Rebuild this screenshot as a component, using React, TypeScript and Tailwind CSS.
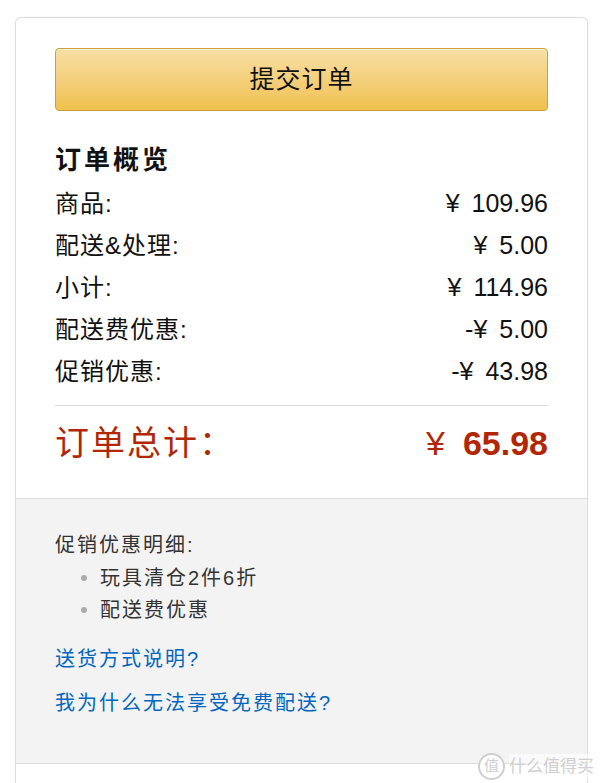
import React from 'react';

const font = "font-['Liberation_Sans','Noto_Sans_CJK_SC',sans-serif]";

const App: React.FC = () => {
  const rows = [
    { label: '商品:', sign: '', amount: '109.96' },
    { label: '配送&处理:', sign: '', amount: '5.00' },
    { label: '小计:', sign: '', amount: '114.96' },
    { label: '配送费优惠:', sign: '-', amount: '5.00' },
    { label: '促销优惠:', sign: '-', amount: '43.98' },
  ];

  return (
    <div className={`relative bg-white min-h-[783px] pt-[17px] ${font} text-[#111]`}>
      <div className="ml-[15px] w-[573px] border border-b-0 border-[#ddd] rounded-t-[6px] shadow-[0_0_2px_rgba(0,0,0,0.06)]">
        {/* summary */}
        <div className="px-[39px] pt-[30px] pb-[18px]">
          <button className="w-full h-[63px] rounded-[4px] border border-[#c9a23e] bg-gradient-to-b from-[#f7dfa5] to-[#f0c14b] shadow-[inset_0_1px_0_rgba(255,255,255,0.5)] text-[25px] tracking-[1px] text-[#111]">
            提交订单
          </button>

          <h2 className="mt-[31px] h-[36px] leading-[36px] text-[26px] tracking-[3px] font-bold">订单概览</h2>

          <div className="mt-[5px]">
            {rows.map((row) => (
              <div key={row.label} className="h-[42px] flex items-center justify-between">
                <span className="text-[24px] tracking-[1px]">{row.label}</span>
                <span className="text-[25px]">
                  {row.sign}
                  <span className="mr-[12px]">¥</span>
                  {row.amount}
                </span>
              </div>
            ))}
          </div>

          <div className="mt-[12px] border-t border-[#ddd]" />

          <div className="h-[74px] flex items-center justify-between text-[#b12704]">
            <span className="text-[34px] tracking-[2px]">订单总计：</span>
            <span className="text-[34px]">
              <span className="mr-[18px]">¥</span>
              <span className="font-bold">65.98</span>
            </span>
          </div>
        </div>

        {/* promo details */}
        <div className="bg-[#f3f3f3] border-t border-b border-[#ddd] px-[39px] pt-[31px] pb-[45px] text-[20px] tracking-[2px]">
          <div className="h-[30px] leading-[30px] text-[#333]">促销优惠明细:</div>
          <ul className="mt-[2px]">
            {['玩具清仓2件6折', '配送费优惠'].map((item) => (
              <li key={item} className="h-[32px] flex items-center text-[#333]">
                <span className="ml-[26px] mr-[13px] w-[6px] h-[6px] rounded-full bg-[#aaa]" />
                {item}
              </li>
            ))}
          </ul>
          <a className="block mt-[18px] h-[30px] leading-[30px] text-[#0066c0]">送货方式说明?</a>
          <a className="block mt-[14px] h-[30px] leading-[30px] text-[#0066c0]">我为什么无法享受免费配送?</a>
        </div>
        <div className="h-[20px]" />
      </div>

      {/* watermark */}
      <div className="absolute right-[6px] bottom-[4px] flex items-center gap-[4px] text-[#cfcfcf] text-[17px]">
        <span className="w-[27px] h-[27px] rounded-full border-2 border-[#cfcfcf] bg-white flex items-center justify-center text-[15px]">
          值
        </span>
        <span className="bg-white/60">什么值得买</span>
      </div>
    </div>
  );
};

export default App;
